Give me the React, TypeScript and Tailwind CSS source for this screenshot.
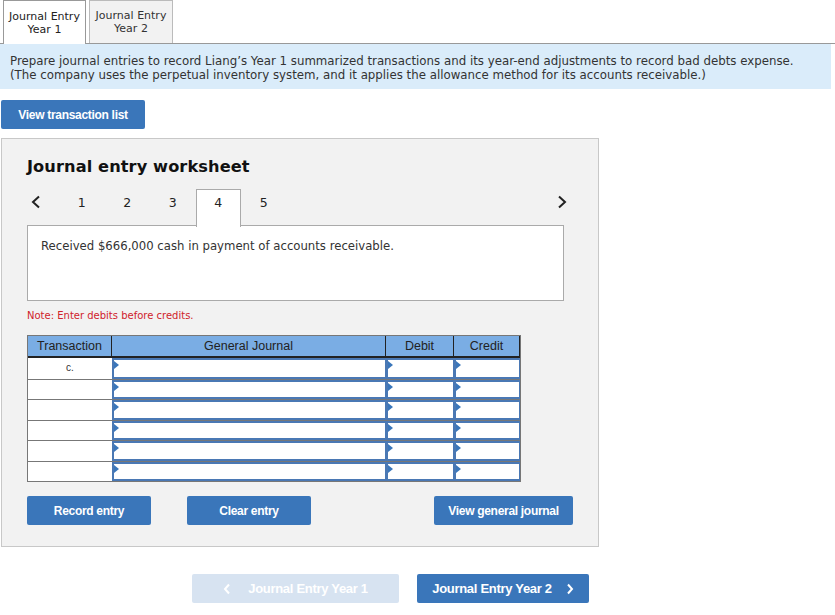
import React from "react";

const verdana = { fontFamily: '"DejaVu Sans", Verdana, sans-serif' };
const arial = { fontFamily: '"Liberation Sans", Arial, sans-serif' };

function Marker() {
  return (
    <span className="absolute left-0 top-[1px] h-0 w-0 border-y-[4px] border-l-[5px] border-y-transparent border-l-[#3a76ba]" />
  );
}

function InputCell({ w }: { w: string }) {
  return (
    <div className={`relative h-full ${w} border-y-[2px] border-l-[2px] border-r border-[#4a78b4] bg-white`}>
      <Marker />
    </div>
  );
}

export default function App() {
  const rows = ["c.", "", "", "", "", ""];
  const steps = ["1", "2", "3", "4", "5"];

  return (
    <div className="relative h-[615px] w-[835px] bg-white text-[#333]" style={verdana}>
      {/* top tabs */}
      <div className="flex h-[44px] items-end gap-[3px] border-b border-[#999] pl-[3px]">
        <div className="flex h-[44px] w-[83px] -mb-px flex-col items-center justify-center border border-b-0 border-[#999] bg-white text-[11px] leading-[13px] text-[#222]">
          <span>Journal Entry</span>
          <span>Year 1</span>
        </div>
        <div className="flex h-[43px] w-[84px] flex-col items-center justify-center border border-b-0 border-[#bbb] bg-[#f2f2f2] text-[11px] leading-[13px] text-[#333]">
          <span>Journal Entry</span>
          <span>Year 2</span>
        </div>
      </div>

      {/* instructions */}
      <div className="w-[831px] bg-[#daecfa] px-[10px] pt-[10px] pb-[7px] text-[11.8px] leading-[14px] text-[#333]">
        <p>Prepare journal entries to record Liang’s Year 1 summarized transactions and its year-end adjustments to record bad debts expense.</p>
        <p>(The company uses the perpetual inventory system, and it applies the allowance method for its accounts receivable.)</p>
      </div>

      <div className="pl-[1px] pt-[11px]">
        <button className="h-[29px] w-[144px] rounded-[2px] bg-[#3a76ba] text-[12px] font-bold tracking-[-0.3px] text-white" style={arial}>
          View transaction list
        </button>
      </div>

      {/* worksheet */}
      <div className="ml-[1px] mt-[9px] h-[409px] w-[598px] border border-[#c8c8c8] bg-[#f2f2f2] pl-[25px] pt-[18px]">
        <h2 className="text-[16.2px] font-bold leading-[20px] tracking-[0.1px] text-[#111]">Journal entry worksheet</h2>

        <div className="mt-[12px] flex h-[37px] w-[536px] items-start">
          <svg width="12" height="14" viewBox="0 0 12 14" className="ml-[3px] mr-[17px] mt-[6px]">
            <path d="M9 1.5 L3 7 L9 12.5" fill="none" stroke="#222" strokeWidth="2" />
          </svg>
          {steps.map((s) => (
            <div
              key={s}
              className={
                s === "4"
                  ? "relative z-10 flex h-[38px] w-[45.5px] justify-center border border-b-0 border-[#aaa] bg-white pt-[4px] text-[12.5px] text-[#222]"
                  : "flex h-[37px] w-[45.5px] justify-center pt-[5px] text-[12.5px] text-[#222]"
              }
            >
              {s}
            </div>
          ))}
          <div className="flex-1" />
          <svg width="12" height="14" viewBox="0 0 12 14" className="mr-[-5px] mt-[6px]">
            <path d="M3 1.5 L9 7 L3 12.5" fill="none" stroke="#222" strokeWidth="2" />
          </svg>
        </div>

        <div className="-mt-px h-[76px] w-[537px] border border-[#aaa] bg-white px-[13px] pt-[12px] text-[11.7px] text-[#333]">
          Received $666,000 cash in payment of accounts receivable.
        </div>

        <p className="mt-[7px] text-[10px] text-[#d0222b]">Note: Enter debits before credits.</p>

        {/* table */}
        <div className="mt-[12px] w-[494px] border border-[#777]" style={arial}>
          <div className="flex h-[22px] border-b-[2px] border-[#222] bg-[#7aade4] text-[12.5px] text-[#222]">
            <div className="flex w-[84px] items-center justify-center border-r border-[#222]">Transaction</div>
            <div className="flex w-[274px] items-center justify-center border-r border-[#222]">General Journal</div>
            <div className="flex w-[68px] items-center justify-center border-r border-[#222]">Debit</div>
            <div className="flex flex-1 items-center justify-center border-r border-[#222]">Credit</div>
          </div>
          {rows.map((r, i) => (
            <div key={i} className={`flex h-[20.5px] ${i > 0 ? "border-t border-[#777]" : ""}`}>
              <div className="flex h-full w-[84px] items-start justify-center bg-white pt-[2px] text-[10px] text-[#333]">{r}</div>
              <InputCell w="w-[274px]" />
              <InputCell w="w-[68px]" />
              <InputCell w="flex-1" />
            </div>
          ))}
        </div>

        {/* buttons */}
        <div className="mt-[14px] flex w-[546px] items-center text-[12px] font-bold tracking-[-0.3px] text-white" style={arial}>
          <button className="h-[29px] w-[124px] rounded-[2px] bg-[#3a76ba]">Record entry</button>
          <button className="ml-[36px] h-[29px] w-[124px] rounded-[2px] bg-[#3a76ba]">Clear entry</button>
          <div className="flex-1" />
          <button className="h-[29px] w-[139px] rounded-[2px] bg-[#3a76ba]">View general journal</button>
        </div>
      </div>

      {/* bottom nav */}
      <div className="mt-[27px] flex items-center pl-[192px] text-[13px] font-bold tracking-[-0.3px] text-white" style={arial}>
        <button className="flex h-[29px] w-[207px] items-center justify-center gap-[17px] rounded-[2px] bg-[#d7e3f1]">
          <svg width="8" height="12" viewBox="0 0 8 12">
            <path d="M6 1.5 L2 6 L6 10.5" fill="none" stroke="#fff" strokeWidth="2" />
          </svg>
          <span>Journal Entry Year 1</span>
        </button>
        <button className="ml-[18px] flex h-[29px] w-[172px] items-center justify-center gap-[14px] rounded-[2px] bg-[#3a76ba]">
          <span>Journal Entry Year 2</span>
          <svg width="8" height="12" viewBox="0 0 8 12">
            <path d="M2 1.5 L6 6 L2 10.5" fill="none" stroke="#fff" strokeWidth="2" />
          </svg>
        </button>
      </div>
    </div>
  );
}
